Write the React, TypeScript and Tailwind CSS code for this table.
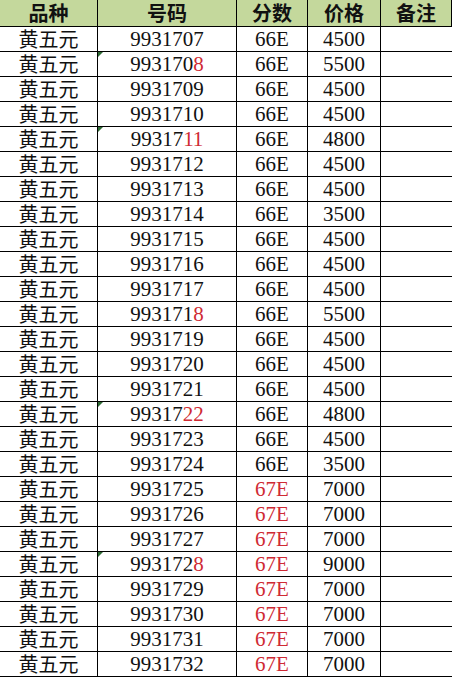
const rows: [string, string, string, string, boolean][] = [
  ["99317", "07", "66E", "4500", false],
  ["993170", "8", "66E", "5500", true],
  ["99317", "09", "66E", "4500", false],
  ["99317", "10", "66E", "4500", false],
  ["99317", "11", "66E", "4800", true],
  ["99317", "12", "66E", "4500", false],
  ["99317", "13", "66E", "4500", false],
  ["99317", "14", "66E", "3500", false],
  ["99317", "15", "66E", "4500", false],
  ["99317", "16", "66E", "4500", false],
  ["99317", "17", "66E", "4500", false],
  ["993171", "8", "66E", "5500", false],
  ["99317", "19", "66E", "4500", false],
  ["99317", "20", "66E", "4500", false],
  ["99317", "21", "66E", "4500", false],
  ["99317", "22", "66E", "4800", true],
  ["99317", "23", "66E", "4500", false],
  ["99317", "24", "66E", "3500", false],
  ["99317", "25", "67E", "7000", false],
  ["99317", "26", "67E", "7000", false],
  ["99317", "27", "67E", "7000", false],
  ["993172", "8", "67E", "9000", true],
  ["99317", "29", "67E", "7000", false],
  ["99317", "30", "67E", "7000", false],
  ["99317", "31", "67E", "7000", false],
  ["99317", "32", "67E", "7000", false],
];

// rows whose last digits are red
const redTail = new Set([1, 4, 11, 15, 21]);

const cjk = "font-['Noto_Sans_CJK_SC',sans-serif]";
const serif = "font-['Liberation_Serif','Times_New_Roman',serif]";

export default function App() {
  return (
    <div className="w-[452px] h-[678px] bg-white overflow-hidden">
      <div className="grid grid-cols-[98px_139px_71px_73px_1fr]">
        {["品种", "号码", "分数", "价格", "备注"].map((h) => (
          <div
            key={h}
            className={`h-[27px] flex items-center justify-center bg-[#c4d89c] border-r border-b border-black text-[20px] font-bold text-[#111] leading-[26px] ${cjk}`}
          >
            {h}
          </div>
        ))}
        {rows.map(([head, tail, score, price, mark], i) => {
          const red67 = score === "67E";
          return [
            <div
              key={`a${i}`}
              className={`h-[25px] flex items-center justify-center border-r border-b border-black text-[20px] text-[#111] leading-[24px] ${cjk}`}
            >
              黄五元
            </div>,
            <div
              key={`b${i}`}
              className={`relative h-[25px] flex items-center justify-center border-r border-b border-black text-[21px] text-[#111] leading-[24px] ${serif}`}
            >
              {mark && (
                <span className="absolute left-0 top-0 w-0 h-0 border-t-[5px] border-r-[5px] border-t-[#2e6b34] border-r-transparent" />
              )}
              <span>
                {head}
                <span className={redTail.has(i) ? "text-[#cf2a33]" : ""}>{tail}</span>
              </span>
            </div>,
            <div
              key={`c${i}`}
              className={`h-[25px] flex items-center justify-center border-r border-b border-black text-[21px] leading-[24px] ${serif} ${red67 ? "text-[#cf2a33]" : "text-[#111]"}`}
            >
              {score}
            </div>,
            <div
              key={`d${i}`}
              className={`h-[25px] flex items-center justify-center border-r border-b border-black text-[21px] text-[#111] leading-[24px] ${serif}`}
            >
              {price}
            </div>,
            <div key={`e${i}`} className="h-[25px] border-b border-black" />,
          ];
        })}
      </div>
    </div>
  );
}
